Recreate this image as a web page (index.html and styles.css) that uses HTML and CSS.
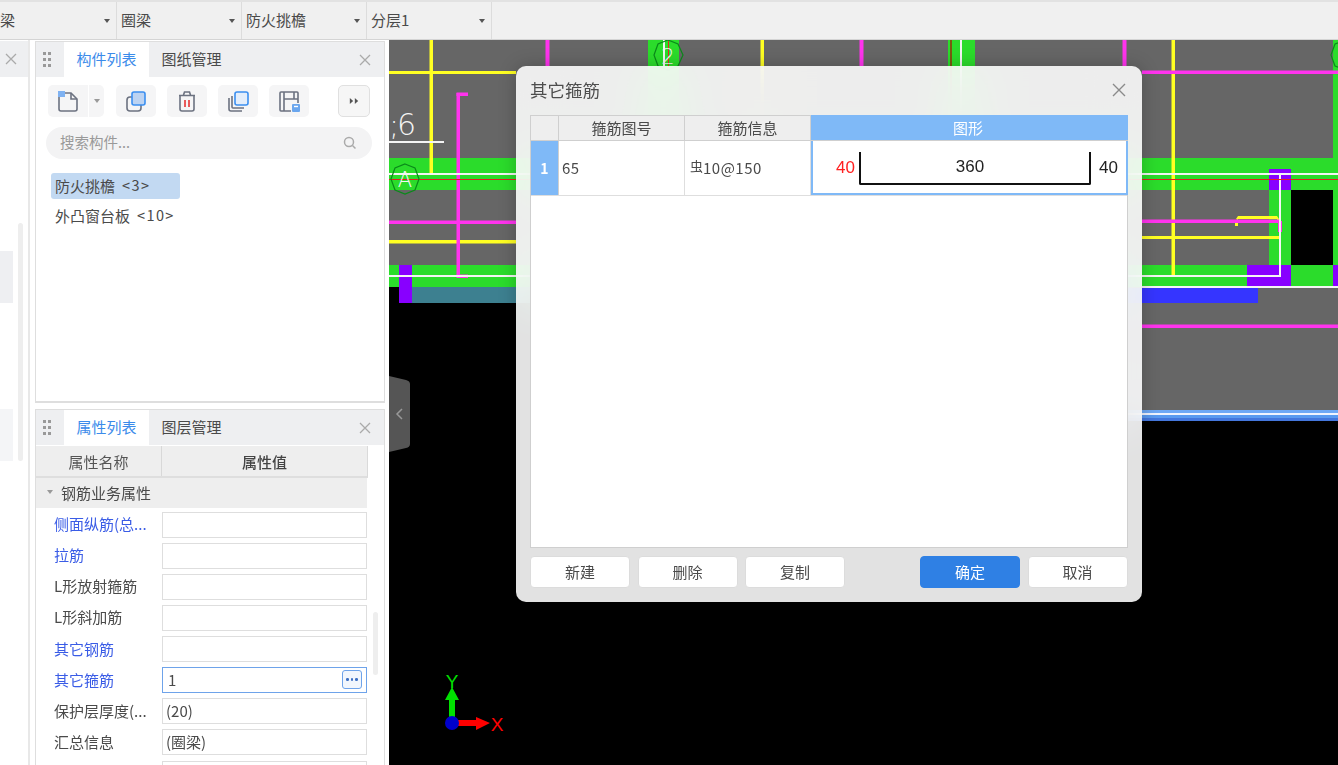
FILE: index.html
```html
<!DOCTYPE html>
<html lang="zh">
<head>
<meta charset="utf-8">
<title>其它箍筋</title>
<link rel="stylesheet" href="styles.css">
</head>
<body>
<div class="app">
  <header class="topbar">
    <div class="combo combo-first"><span class="combo-text combo-clip">梁</span><i class="caret"></i></div>
    <div class="combo"><span class="combo-text">圈梁</span><i class="caret"></i></div>
    <div class="combo"><span class="combo-text">防火挑檐</span><i class="caret"></i></div>
    <div class="combo"><span class="combo-text">分层1</span><i class="caret"></i></div>
  </header>
  <main class="main">
    <aside class="sliver">
      <div class="sliver-head"><svg class="close" viewBox="0 0 12 12"><path d="M1 1l10 10M11 1L1 11"/></svg></div>
      <div class="sliver-body">
        <div class="tile tile-a"></div>
        <div class="tile tile-b"></div>
        <div class="sliver-scroll"></div>
      </div>
    </aside>
    <section class="panels">
      <div class="panel panel-list">
        <div class="panel-head">
          <div class="grip"><i></i><i></i><i></i><i></i><i></i><i></i></div>
          <div class="tab tab-active">构件列表</div>
          <div class="tab">图纸管理</div>
          <svg class="close close-end" viewBox="0 0 12 12"><path d="M1 1l10 10M11 1L1 11"/></svg>
        </div>
        <div class="toolbar">
          <div class="split">
            <button class="tool tool-main">
              <svg viewBox="0 0 24 24" class="ico"><path class="st-gray" d="M3 4h12l6 6v10a2 2 0 0 1-2 2H5a2 2 0 0 1-2-2z"/><path class="st-gray" d="M15 4v6h6"/><rect class="fill-hatch" x="2" y="2" width="7" height="6"/></svg>
            </button>
            <button class="tool tool-drop"><i class="caret caret-light"></i></button>
          </div>
          <button class="tool">
            <svg viewBox="0 0 24 24" class="ico"><rect class="st-gray" x="3" y="8" width="14" height="14" rx="3"/><rect class="st-blue" x="8" y="3" width="13" height="13" rx="2"/></svg>
          </button>
          <button class="tool">
            <svg viewBox="0 0 24 24" class="ico"><path class="st-gray" d="M5 7v13a2 2 0 0 0 2 2h10a2 2 0 0 0 2-2V7M4 6.500h16M8.500 6l1-3h5l1 3"/><path class="st-red" d="M10 11v7M14 11v7"/></svg>
          </button>
          <button class="tool">
            <svg viewBox="0 0 24 24" class="ico"><path class="st-gray" d="M3 9v11a2 2 0 0 0 2 2h11M6 7v11a1 1 0 0 0 1 1h11"/><rect class="st-blue-l" x="9" y="3" width="13" height="13" rx="2"/></svg>
          </button>
          <button class="tool">
            <svg viewBox="0 0 24 24" class="ico"><path class="st-gray" d="M14 22H4a1 1 0 0 1-1-1V4a1 1 0 0 1 1-1h16a1 1 0 0 1 1 1v10M7 3v19M7 10h14M17 3v7"/><rect class="fill-save" x="15" y="15" width="8" height="8" rx="1"/><path class="st-white" d="M17 17.500h4"/></svg>
          </button>
          <button class="tool tool-more">
            <svg viewBox="0 0 12 12" class="ico-sm"><path class="fill-dark" d="M1 2.500l4 3.500-4 3.500zM7 2.500l4 3.500-4 3.500z"/></svg>
          </button>
        </div>
        <div class="search">
          <span class="search-text">搜索构件...</span>
          <svg viewBox="0 0 14 14" class="search-ico"><circle cx="6" cy="6" r="4.500"/><path d="M9.500 9.500L12.500 12.500"/></svg>
        </div>
        <ul class="items">
          <li class="item item-selected">防火挑檐<span class="count">&lt;3&gt;</span></li>
          <li class="item">外凸窗台板<span class="count">&lt;10&gt;</span></li>
        </ul>
      </div>
      <div class="panel panel-props">
        <div class="panel-head">
          <div class="grip"><i></i><i></i><i></i><i></i><i></i><i></i></div>
          <div class="tab tab-active">属性列表</div>
          <div class="tab">图层管理</div>
          <svg class="close close-end" viewBox="0 0 12 12"><path d="M1 1l10 10M11 1L1 11"/></svg>
        </div>
        <div class="prop-head">
          <div class="prop-head-name">属性名称</div>
          <div class="prop-head-value">属性值</div>
        </div>
        <div class="prop-group"><i class="caret caret-light"></i>钢筋业务属性</div>
        <div class="prop-list">
          <div class="prop-row"><span class="prop-label prop-blue">侧面纵筋(总...</span><div class="prop-input"></div></div>
          <div class="prop-row"><span class="prop-label prop-blue">拉筋</span><div class="prop-input"></div></div>
          <div class="prop-row"><span class="prop-label">L形放射箍筋</span><div class="prop-input"></div></div>
          <div class="prop-row"><span class="prop-label">L形斜加筋</span><div class="prop-input"></div></div>
          <div class="prop-row"><span class="prop-label prop-blue">其它钢筋</span><div class="prop-input"></div></div>
          <div class="prop-row"><span class="prop-label prop-blue">其它箍筋</span><div class="prop-input prop-input-active"><span>1</span><button class="dots"><i></i><i></i><i></i></button></div></div>
          <div class="prop-row"><span class="prop-label">保护层厚度(...</span><div class="prop-input">(20)</div></div>
          <div class="prop-row"><span class="prop-label">汇总信息</span><div class="prop-input">(圈梁)</div></div>
          <div class="prop-row"><span class="prop-label"></span><div class="prop-input"></div></div>
        </div>
        <div class="prop-scroll"></div>
      </div>
    </section>
    <div class="canvas">
      <svg class="cad" viewBox="389 40 949 725" xmlns="http://www.w3.org/2000/svg">
        <rect x="389" y="40" width="949" height="725" fill="#000"/>
        <rect x="389" y="40" width="949" height="247" fill="#666"/>
        <rect x="1000" y="287" width="338" height="123" fill="#666"/>
        <g fill="#2bdc2b">
          <rect x="389" y="158" width="949" height="32"/>
          <rect x="389" y="265" width="949" height="22"/>
          <rect x="648" y="40" width="31" height="118"/>
          <rect x="948" y="40" width="27" height="118"/>
          <rect x="1333" y="40" width="5" height="118"/>
          <rect x="1269" y="190" width="22" height="75"/>
          <rect x="1333" y="190" width="5" height="75"/>
        </g>
        <rect x="1291" y="190" width="42" height="75" fill="#000"/>
        <g fill="#8800ff">
          <rect x="399" y="265" width="13" height="38"/>
          <rect x="1269" y="169" width="22" height="21"/>
          <rect x="1247" y="265" width="44" height="21"/>
          <rect x="1333" y="265" width="5" height="21"/>
        </g>
        <rect x="412" y="287" width="600" height="16" fill="#3d8090"/>
        <rect x="1000" y="288" width="258" height="15" fill="#3535ff"/>
        <g fill="#ffff22">
          <rect x="429.500" y="40" width="3.500" height="134"/>
          <rect x="760.500" y="40" width="3.500" height="118"/>
          <rect x="1171.500" y="40" width="3.500" height="235"/>
          <rect x="389" y="71" width="127" height="3"/>
          <rect x="389" y="240" width="127" height="3.500"/>
          <rect x="1142" y="236" width="137" height="3"/>
          <path d="M1236 219l2-3h39l2 3v2h-2v-2h-39v1z"/>
          <rect x="1235" y="223" width="3" height="3"/>
        </g>
        <g fill="#ff33ee">
          <rect x="545.500" y="40" width="4" height="26"/>
          <rect x="859.500" y="40" width="4" height="26"/>
          <rect x="1122.500" y="40" width="4" height="26"/>
          <rect x="1142" y="70.500" width="196" height="3.500"/>
          <rect x="389" y="220.500" width="127" height="3.500"/>
          <rect x="1142" y="219.500" width="137" height="3.500"/>
          <rect x="1278" y="221" width="4" height="11"/>
          <rect x="1142" y="324.500" width="196" height="3.500"/>
          <rect x="456.500" y="93" width="3.500" height="184"/>
          <rect x="456.500" y="92.500" width="11.500" height="3.500"/>
          <rect x="456.500" y="274.500" width="11.500" height="3.500"/>
        </g>
        <g fill="#f4f4f4">
          <rect x="389" y="173" width="949" height="2"/>
          <rect x="389" y="275" width="891" height="2"/>
          <rect x="1279" y="174" width="2" height="103"/>
          <rect x="663" y="40" width="2" height="26"/>
          <rect x="960" y="40" width="2" height="118"/>
          <rect x="1142" y="286" width="196" height="2"/>
          <rect x="389" y="141" width="55" height="2"/>
        </g>
        <rect x="389" y="179" width="949" height="1" fill="#e02020"/>
        <rect x="950" y="40" width="2" height="118" fill="#7a5a10"/>
        <rect x="668" y="40" width="1" height="26" fill="#e03020"/>
        <rect x="1000" y="410" width="338" height="3" fill="#6ea8f5"/>
        <rect x="1000" y="413" width="338" height="2" fill="#f0f4ff"/>
        <rect x="1000" y="415" width="338" height="3" fill="#5a9af0"/>
        <rect x="1000" y="418" width="338" height="3" fill="#4477dd"/>
        <g class="bubble">
          <polygon points="405,164 415,168 419,179 415,190 405,194 395,190 391,179 395,168"/>
          <polygon points="668,40 678,44 683,55 678,66 668,70 658,66 654,55 658,44"/>
          <polygon points="1345,40 1335,44 1331,55 1335,66 1345,70"/>
        </g>
        <text class="cad-text cad-a" x="405" y="187">A</text>
        <text class="cad-text cad-a" x="668" y="64">2</text>
        <text class="cad-text cad-six" x="389" y="135">;6</text>
        <path d="M389 376l17 4q4 1 4 4v60q0 3-4 4l-17 4z" fill="#555"/>
        <path d="M402 409l-5 5 5 5" fill="none" stroke="#999" stroke-width="1.500"/>
        <path d="M449 723v-23h-4l7-13 7 13h-4v23z" fill="#00e000"/>
        <path d="M452 720h24v-3l14 6-14 7v-4h-24z" fill="#ff0000"/>
        <circle cx="452" cy="723" r="7" fill="#0000cc"/>
        <text class="cad-axis cad-axis-y" x="452" y="688">Y</text>
        <text class="cad-axis cad-axis-x" x="497" y="731">X</text>
      </svg>
    </div>
  </main>

  <div class="dialog">
    <div class="dialog-title">
      <span>其它箍筋</span>
      <svg class="dialog-close" viewBox="0 0 14 14"><path d="M1 1l12 12M13 1L1 13"/></svg>
    </div>
    <div class="grid">
      <div class="grid-row grid-head">
        <div class="cell cell-idx"></div>
        <div class="cell cell-col">箍筋图号</div>
        <div class="cell cell-col">箍筋信息</div>
        <div class="cell cell-fig-head">图形</div>
      </div>
      <div class="grid-row grid-data">
        <div class="cell cell-num">1</div>
        <div class="cell cell-val">65</div>
        <div class="cell cell-val"><span class="grade">虫</span>10@150</div>
        <div class="cell cell-fig">
          <span class="fig-left">40</span>
          <div class="fig-shape"><span>360</span></div>
          <span class="fig-right">40</span>
        </div>
      </div>
    </div>
    <div class="dialog-actions">
      <button class="btn">新建</button>
      <button class="btn">删除</button>
      <button class="btn">复制</button>
      <button class="btn btn-primary">确定</button>
      <button class="btn">取消</button>
    </div>
  </div>
</div>
</body>
</html>
```
FILE: styles.css
```css
* { box-sizing: border-box; }
html, body { margin: 0; padding: 0; }
body {
  font-family: "Noto Sans CJK SC", "Noto Sans", sans-serif;
  font-size: 15px;
  color: #4a4a4a;
  background: #fff;
}
button { font: inherit; color: inherit; padding: 0; border: 0; background: none; }
ul { list-style: none; margin: 0; padding: 0; }

.app { position: relative; width: 1338px; height: 765px; overflow: hidden; display: flex; flex-direction: column; filter: blur(0.4px); }

/* top bar */
.topbar {
  height: 40px; flex: none; display: flex;
  background: #f0f0f0;
  border-top: 2px solid #e2e2e2;
  border-bottom: 1px solid #d4d4d4;
}
.combo {
  width: 125px; display: flex; align-items: center; justify-content: space-between;
  padding: 0 6px 2px 4px;
  border-right: 1px solid #dcdcdc;
  overflow: hidden;
}
.combo .caret { margin-top: 2px; }
.combo-first { width: 117px; }
.combo-clip { margin-left: -4px; }
.combo-text { line-height: 1; }
.caret {
  display: block; width: 0; height: 0;
  border-left: 3.5px solid transparent; border-right: 3.5px solid transparent;
  border-top: 4px solid #555;
}
.caret-light { border-top-color: #999; }
.topbar::after { content: ""; flex: 1; }

/* main */
.main { flex: 1; display: flex; min-height: 0; }
.sliver { width: 30px; flex: none; border-right: 2px solid #e8e8e8; display: flex; flex-direction: column; }
.sliver-head { height: 36px; margin-top: 1px; flex: none; background: #eeeff1; display: flex; align-items: center; padding-left: 5px; }
.sliver-body { flex: 1; position: relative; }
.tile { position: absolute; left: 0; width: 13px; height: 52px; }
.tile-a { top: 174px; background: #eeeff2; }
.tile-b { top: 332px; background: #f4f5f7; }
.sliver-scroll { position: absolute; left: 18px; top: 146px; width: 5px; height: 238px; border-radius: 3px; background: #eeeeee; }

.close { width: 12px; height: 12px; fill: none; stroke: #aaa; stroke-width: 1.3; flex: none; }
.close-end { margin: 0 13px 0 auto; }

.panels { width: 350px; margin-left: 5px; margin-right: 4px; flex: none; display: flex; flex-direction: column; gap: 6px; padding-top: 1px; }
.panel { position: relative; border: 1px solid #dedede; background: #fff; border-bottom-width: 2px; }
.panel-list { height: 362px; flex: none; }
.panel-props { flex: 1; min-height: 0; overflow: hidden; border-bottom: 0; }
.panel-head { height: 35px; background: #eeeff1; display: flex; align-items: stretch; }
.panel-head .close-end { align-self: center; }
.grip { width: 28px; padding: 0 0 0 7px; display: grid; grid-template-columns: 3px 3px; gap: 3px 2px; justify-content: start; align-content: center; }
.grip i { width: 3px; height: 3px; background: #999; }
.tab { width: 85px; display: flex; align-items: center; justify-content: center; line-height: 1; padding-bottom: 2px; }
.tab-active { background: #fff; color: #3b8bea; }

.toolbar { display: flex; gap: 11px; padding: 8px 14px 0 12px; height: 41px; }
.tool { width: 40px; height: 32px; background: #f5f5f6; border-radius: 5px; display: flex; align-items: center; justify-content: center; }
.split { display: flex; gap: 1px; margin-right: 1px; }
.tool-main { border-radius: 5px 0 0 5px; }
.tool-drop { width: 15px; border-radius: 0 5px 5px 0; }
.tool-more { width: 32px; margin-left: auto; border: 1px solid #e0e0e0; background: #f6f6f6; }
.ico { width: 24px; height: 24px; }
.ico-sm { width: 10px; height: 10px; }
.st-gray { fill: none; stroke: #6c7280; stroke-width: 1.6; }
.st-blue { fill: #bcd3f2; stroke: #3b8ff0; stroke-width: 1.6; }
.st-blue-l { fill: #e4eefb; stroke: #3b8ff0; stroke-width: 1.6; }
.st-red { fill: none; stroke: #e84a4a; stroke-width: 1.8; }
.st-white { fill: none; stroke: #fff; stroke-width: 1.4; }
.fill-hatch { fill: #7fb2f2; }
.fill-save { fill: #6aa6ee; }
.fill-dark { fill: #555; }

.search { margin: 9px 12px 0 10px; height: 32px; border-radius: 16px; background: #f3f3f4; display: flex; align-items: center; justify-content: space-between; padding: 0 15px 0 14px; }
.search-text { color: #999; font-size: 14.5px; line-height: 1; padding-bottom: 1px; }
.search-ico { width: 14px; height: 14px; fill: none; stroke: #aaa; stroke-width: 1.5; }

.items { padding: 14px 0 0 15px; display: flex; flex-direction: column; gap: 5px; }
.item { height: 25px; width: 129px; padding: 0 0 2px 4px; display: flex; align-items: center; line-height: 1; white-space: nowrap; border-radius: 3px; }
.item-selected { height: 26px; background: #c2d9f2; }
.count { margin-left: 7px; font-size: 14.5px; letter-spacing: 1.4px; }

/* properties */
.prop-head { width: 332px; height: 32px; margin-top: 1px; display: flex; background: #eeeeee; border-bottom: 2px solid #dedede; border-right: 1px solid #dadada; }
.prop-head-name { width: 126px; display: flex; align-items: center; justify-content: center; border-right: 1px solid #d8d8d8; color: #555; }
.prop-head-value { flex: 1; display: flex; align-items: center; justify-content: center; font-weight: 500; color: #444; }
.prop-group { width: 331px; height: 30px; background: #eeeeee; display: flex; align-items: center; padding: 0 0 2px 11px; gap: 8px; line-height: 1; }
.prop-list { padding-top: 1px; width: 331px; }
.prop-row { height: 31.125px; display: flex; align-items: center; }
.prop-label { width: 126px; padding: 0 0 2px 18px; flex: none; white-space: nowrap; line-height: 1; }
.prop-blue { color: #3a5ce6; }
.prop-input { width: 205px; height: 26px; border: 1px solid #dedede; background: #fff; display: flex; align-items: center; justify-content: space-between; padding: 0 4px 1px 3px; line-height: 1; }
.prop-input-active { border: 1.5px solid #6ea3ea; padding-left: 5px; }
.dots { width: 20px; height: 19px; border: 1px solid #6ea3ea; background: #f1f6fd; border-radius: 3px; display: flex; align-items: center; justify-content: center; gap: 2px; }
.dots i { width: 2.5px; height: 2.5px; background: #3d6fc4; border-radius: 50%; }
.prop-scroll { position: absolute; left: 337px; top: 202px; width: 5px; height: 63px; border-radius: 3px; background: #eeeeee; }

/* canvas */
.canvas { flex: 1; min-width: 0; position: relative; }
.cad { display: block; width: 949px; height: 725px; }
.bubble polygon { fill: none; stroke: #0a8a1a; stroke-width: 1.2; }
.cad-text { fill: #f4f4f4; font-family: "DejaVu Sans", sans-serif; font-weight: 200; }
.cad-a { font-size: 21px; text-anchor: middle; }
.cad-six { font-size: 30px; letter-spacing: -2px; }
.cad-axis { font-family: "Liberation Sans", sans-serif; font-size: 19px; text-anchor: middle; }
.cad-axis-y { fill: #00e000; }
.cad-axis-x { fill: #ff0000; }

/* dialog */
.dialog {
  position: absolute; left: 516px; top: 66px; width: 626px; height: 536px;
  border-radius: 10px;
  background: rgba(255, 255, 255, 0.885);
  -webkit-backdrop-filter: blur(24px);
  backdrop-filter: blur(24px);
  box-shadow: 0 0 18px rgba(0, 0, 0, 0.22);
  padding: 0 14px;
  display: flex; flex-direction: column;
}
.dialog-title { height: 49px; flex: none; display: flex; align-items: center; justify-content: space-between; font-size: 17.5px; line-height: 1; padding-bottom: 2px; color: #4d4d4d; }
.dialog-close { width: 14px; height: 14px; margin-right: 2px; fill: none; stroke: #8a8a8a; stroke-width: 1.4; }
.grid { flex: none; height: 433px; background: #fff; border: 1px solid #cfcfcf; }
.grid-row { display: flex; }
.grid-head { height: 25px; background: #eeeeee; border-bottom: 1px solid #cfcfcf; }
.grid-data { height: 55px; border-bottom: 1px solid #dedede; }
.cell { display: flex; align-items: center; line-height: 1; }
.cell-idx { width: 28px; border-right: 1px solid #cfcfcf; }
.cell-col { width: 126px; justify-content: center; border-right: 1px solid #cfcfcf; padding-bottom: 1px; }
.cell-fig-head { flex: 1; justify-content: center; padding-right: 3px; background: #7fb9f7; color: #fff; margin: -1px -1px 0 0; }
.cell-num { width: 28px; justify-content: center; background: #7fb9f7; color: #fff; font-size: 14px; font-weight: 700; border-right: 1px solid #cfcfcf; }
.cell-val { width: 126px; padding: 0 0 2px 3px; border-right: 1px solid #dedede; letter-spacing: 0.5px; }
.grade { font-size: 13px; position: relative; top: -2px; margin-left: 2px; letter-spacing: 0; }
.cell-fig { flex: 1; margin-right: -1px; border: 2px solid #7fb9f7; border-top: 0; font-family: "Liberation Sans", sans-serif; font-size: 17px; color: #222; display: flex; align-items: center; padding-left: 23px; }
.fig-left { color: #ff2020; width: 23px; }
.fig-shape { width: 232px; height: 33px; margin-top: 2px; border: 2.5px solid #111; border-top: 0; border-radius: 0 0 2px 2px; display: flex; align-items: center; justify-content: center; }
.fig-shape span { margin: -1px 10px 0 0; }
.fig-right { margin-left: 8px; }
.dialog-actions { flex: none; display: flex; gap: 7.5px; padding-top: 8px; }
.btn { flex: none; width: 100px; height: 32px; background: #fff; border: 1px solid #dcdcdc; border-radius: 4px; line-height: 1; font-size: 15px; padding-bottom: 1px; }
.btn:nth-child(3) { margin-right: 67.5px; }
.btn-primary { background: #2f80e4; border-color: #2f80e4; color: #fff; }
```
